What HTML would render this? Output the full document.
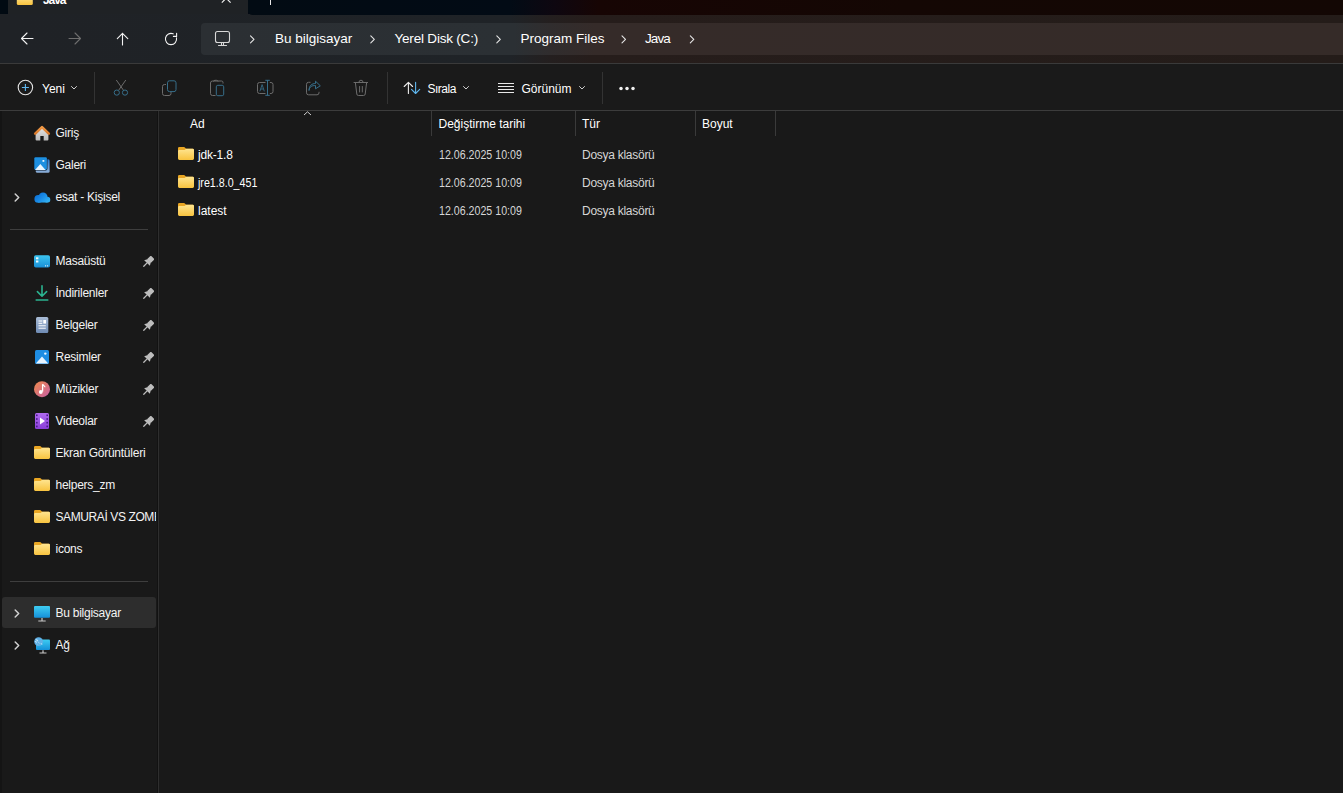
<!DOCTYPE html>
<html><head><meta charset="utf-8">
<style>
*{margin:0;padding:0;box-sizing:border-box}
html,body{width:1343px;height:793px;overflow:hidden;background:#191919}
body{position:relative;font-family:"Liberation Sans",sans-serif;font-size:12px;color:#fff}
.a{position:absolute}
.t{position:absolute;line-height:1;white-space:nowrap}
svg{position:absolute;overflow:visible}
#title{left:0;top:0;width:1343px;height:14px;background:linear-gradient(90deg,#010914 0%,#050812 30%,#0c0505 60%,#120604 100%)}
#nav{left:0;top:14px;width:1343px;height:49px;background:linear-gradient(90deg,#1f2226 0%,#1f2327 38%,#241f1f 41%,#261d1b 44%,#241c19 100%)}
#tab{left:8px;top:0;width:240px;height:14px;background:#1f2225}
#addr{left:201px;top:23px;width:1160px;height:32px;border-radius:4px;background:linear-gradient(90deg,#2b2f33 0%,#2b3034 27%,#302d2e 30%,#352b29 34%,#352b28 100%)}
#line1{left:0;top:63px;width:1343px;height:1px;background:#3a3a3a}
#tool{left:0;top:64px;width:1343px;height:46px;background:#1a1a1a}
#line2{left:0;top:110px;width:1343px;height:1px;background:#3c3c3c}
#side{left:0;top:111px;width:158px;height:682px;background:#191919}
#sdiv{left:158px;top:111px;width:1px;height:682px;background:#2e2e2e;box-shadow:-1px 0 0 #121212,1px 0 0 #161616}
#main{left:159px;top:111px;width:1184px;height:682px;background:#191919}
.sep{background:#3e3e3e;height:1px}
.vsep{background:#3a3a3a;width:1px}
.coldiv{background:#3a3a3a;width:1px;top:111px;height:25px}
.sb{font-size:12px;color:#f3f3f3;letter-spacing:-0.25px}
.row{font-size:12px}
.gray{color:#d6d6d6}
</style></head><body>
<div id="title" class="a"></div>
<div id="nav" class="a"></div>
<div id="tab" class="a"></div>
<div id="addr" class="a"></div>
<div id="line1" class="a"></div>
<div id="tool" class="a"></div>
<div id="line2" class="a"></div>
<div id="side" class="a"></div>
<div id="sdiv" class="a"></div>
<div class="a" style="left:0;top:111px;width:2px;height:682px;background:#141414"></div>
<div id="main" class="a"></div>
<div class="a" style="left:2px;top:597px;width:154px;height:31px;border-radius:3px;background:#2d2d2d"></div>


<!-- title bar bits -->
<div class="a" style="left:248px;top:0;width:1095px;height:14.6px;border-bottom-left-radius:4.5px;background:linear-gradient(90deg,#020b13 0%,#020b15 24%,#0e0710 28%,#170504 32%,#140704 60%,#130704 100%)"></div>
<div class="a" style="left:0;top:0;width:8px;height:14px;border-bottom-right-radius:3px;background:#010a12"></div>
<svg style="left:0;top:0" width="300" height="14">
 <path d="M16.8 -4 h14.5 a1.5 1.5 0 0 1 1.5 1.5 v6 a1.5 1.5 0 0 1 -1.5 1.5 h-13 a1.5 1.5 0 0 1 -1.5 -1.5z" fill="url(#fg)"/>
 <path d="M22.5 -3 L231 3" stroke="none"/>
 <path d="M221.8 -6.2 L230.6 2.6 M230.6 -6.2 L221.8 2.6" stroke="#f0f0f0" stroke-width="1.15"/>
 <path d="M270.5 -5 V5" stroke="#e8e8e8" stroke-width="1"/>
</svg>
<div class="t" style="left:43px;top:-6.5px;font-size:12px;color:#fff;letter-spacing:-1.1px;font-weight:bold">Java</div>

<!-- nav arrows -->
<svg style="left:0;top:14px" width="200" height="49">
 <g fill="none" stroke-width="1.1" stroke-linecap="round" stroke-linejoin="round">
  <path d="M33 24.5 H21.5 M27 19 L21.5 24.5 L27 30" stroke="#f2f2f2"/>
  <path d="M69 24.5 H80.5 M75 19 L80.5 24.5 L75 30" stroke="#6e6e6e"/>
  <path d="M122.5 31 V19.3 M117.3 24.6 L122.5 19.3 L127.8 24.6" stroke="#f2f2f2"/>
  <path d="M173.2 19.85 A5.6 5.6 0 1 0 176.5 23.9" stroke="#f2f2f2"/>
  <path d="M176.6 19.2 V22.4 H173.4" stroke="#f2f2f2"/>
 </g>
</svg>

<!-- address bar icons -->
<svg style="left:200px;top:23px" width="520" height="32">
 <g fill="none" stroke="#d8d8d8" stroke-width="1.1" stroke-linecap="round" stroke-linejoin="round">
  <rect x="15.5" y="8.5" width="14" height="11" rx="2"/>
  <path d="M21.5 20 V22 M23.5 20 V22 M18.5 22.5 H26.5"/>
 </g>
 <g fill="none" stroke="#e6e6e6" stroke-width="1.1" stroke-linecap="round" stroke-linejoin="round">
  <path d="M50.5 12.8 L54 16.3 L50.5 19.8"/>
  <path d="M170.8 12.8 L174.3 16.3 L170.8 19.8"/>
  <path d="M296.8 12.8 L300.3 16.3 L296.8 19.8"/>
  <path d="M422 12.8 L425.5 16.3 L422 19.8"/>
  <path d="M490.3 12.8 L493.8 16.3 L490.3 19.8"/>
 </g>
</svg>

<!-- toolbar icons -->
<svg style="left:0;top:64px" width="700" height="46">
 <circle cx="25.4" cy="23.5" r="7.2" fill="none" stroke="#e4e4e4" stroke-width="1.1"/>
 <path d="M25.4 20 V27 M21.9 23.5 H28.9" stroke="#5fb6ee" stroke-width="1.1" fill="none"/>
 <path d="M71.5 22.5 L74 25 L76.5 22.5" stroke="#cfcfcf" stroke-width="1" fill="none" stroke-linecap="round"/>
 <rect x="94" y="8" width="1" height="32" fill="#333"/>
 <!-- scissors -->
 <g fill="none" stroke-width="1">
  <path d="M116.3 16 L123.3 26 M125.8 16 L118.8 26" stroke="#6c6c6c"/>
  <circle cx="116.8" cy="28.6" r="2.6" stroke="#376f8b"/>
  <circle cx="125" cy="28.6" r="2.6" stroke="#376f8b"/>
 </g>
 <!-- copy -->
 <g fill="none" stroke-width="1">
  <path d="M166 20.5 h-1.5 a2 2 0 0 0 -2 2 v7 a2 2 0 0 0 2 2 h4.5 a2 2 0 0 0 2 -2 v-1.5" stroke="#6c6c6c"/>
  <rect x="167.5" y="16.8" width="8.5" height="10.8" rx="2" stroke="#376f8b"/>
 </g>
 <!-- paste -->
 <g fill="none" stroke-width="1">
  <path d="M215.5 31.5 h-3 a2 2 0 0 1 -2 -2 v-10.5 a2 2 0 0 1 2 -2 h9 a1.5 1.5 0 0 1 1.5 1.5 v1" stroke="#6c6c6c"/>
  <path d="M213.5 17.5 a1.5 1.5 0 0 1 1.5 -1.2 h1.5 a1.5 1.5 0 0 1 1.5 1.2" stroke="#6c6c6c"/>
  <rect x="216.3" y="21.3" width="7.4" height="10.4" rx="1.5" stroke="#376f8b"/>
 </g>
 <!-- rename -->
 <g fill="none" stroke-width="1">
  <path d="M265.5 18.5 h-6 a2 2 0 0 0 -2 2 v7 a2 2 0 0 0 2 2 h6" stroke="#6c6c6c"/>
  <path d="M269.8 18.5 h1.2 a2 2 0 0 1 2 2 v7 a2 2 0 0 1 -2 2 h-1.2" stroke="#6c6c6c"/>
  <path d="M267.5 16 V31.5 M265.3 16.3 H269.8 M265.3 31.3 H269.8" stroke="#376f8b"/>
  <path d="M259.9 27.3 L262.1 20.6 L264.3 27.3 M260.7 25 H263.5" stroke="#376f8b" stroke-width="0.85"/>
 </g>
 <!-- share -->
 <g fill="none" stroke-width="1" stroke-linejoin="round">
  <path d="M310.5 18.3 h-2 a2 2 0 0 0 -2 2 v8.5 a2 2 0 0 0 2 2 h8.5 a2 2 0 0 0 2 -2 v-1" stroke="#6c6c6c"/>
  <path d="M309 26.5 C309.5 22.5 312 21.5 315.5 21.5 V24.8 L320.3 21.8 L315.5 17.2 V19.5 C312 19.5 309 21.5 309 26.5z" stroke="#376f8b"/>
 </g>
 <!-- delete -->
 <g fill="none" stroke="#6c6c6c" stroke-width="1" stroke-linecap="round">
  <path d="M354 18.5 H367.6"/>
  <path d="M358.9 18.3 a2.1 2.1 0 0 1 4.2 0"/>
  <path d="M355.4 18.8 L356.8 30 a1.6 1.6 0 0 0 1.6 1.5 h5.2 a1.6 1.6 0 0 0 1.6 -1.5 L366.6 18.8"/>
  <path d="M359.6 22.5 V28 M362.3 22.5 V28"/>
 </g>
 <rect x="387" y="8" width="1" height="32" fill="#333"/>
 <!-- sort -->
 <g fill="none" stroke-width="1.1" stroke-linecap="round" stroke-linejoin="round">
  <path d="M408.4 29.5 V18.3 M404.2 22.5 L408.4 18.3 L412.6 22.5" stroke="#ededed"/>
  <path d="M415.6 18.3 V29.5 M411.5 25.3 L415.6 29.5 L419.7 25.3" stroke="#5fb6ee"/>
 </g>
 <path d="M463.5 22.5 L466 25 L468.5 22.5" stroke="#cfcfcf" stroke-width="1" fill="none" stroke-linecap="round"/>
 <!-- view -->
 <g stroke="#e8e8e8" stroke-width="1.1">
  <path d="M498 19.5 H514 M498 22.5 H514 M498 25.5 H514 M498 28.5 H514"/>
 </g>
 <path d="M579.5 22.5 L582 25 L584.5 22.5" stroke="#cfcfcf" stroke-width="1" fill="none" stroke-linecap="round"/>
 <rect x="602" y="8" width="1" height="32" fill="#333"/>
 <circle cx="621" cy="24.6" r="1.75" fill="#f0f0f0"/>
 <circle cx="627" cy="24.6" r="1.75" fill="#f0f0f0"/>
 <circle cx="633" cy="24.6" r="1.75" fill="#f0f0f0"/>
</svg>

<!-- sort caret -->
<svg style="left:300px;top:110px" width="16" height="8">
 <path d="M4 5 L7.5 1.8 L11 5" stroke="#cfcfcf" stroke-width="1" fill="none"/>
</svg>


<svg width="0" height="0" style="position:absolute">
 <defs>
  <linearGradient id="fg" x1="0" y1="0" x2="0" y2="1"><stop offset="0" stop-color="#ffe590"/><stop offset="1" stop-color="#f8c33f"/></linearGradient>
  <linearGradient id="roof" x1="0" y1="0" x2="0" y2="1"><stop offset="0" stop-color="#f29a46"/><stop offset="1" stop-color="#d8782a"/></linearGradient>
  <linearGradient id="wall" x1="0" y1="0" x2="0" y2="1"><stop offset="0" stop-color="#e6e6e6"/><stop offset="1" stop-color="#b9b9b9"/></linearGradient>
  <linearGradient id="desk" x1="0" y1="0" x2="0" y2="1"><stop offset="0" stop-color="#3cc4f0"/><stop offset="1" stop-color="#1a8fd6"/></linearGradient>
  <linearGradient id="doc" x1="0" y1="0" x2="0" y2="1"><stop offset="0" stop-color="#a9bcd6"/><stop offset="1" stop-color="#6f8bb4"/></linearGradient>
  <linearGradient id="mus" x1="0" y1="0" x2="1" y2="1"><stop offset="0" stop-color="#f08a4a"/><stop offset="1" stop-color="#c65fa6"/></linearGradient>
  <linearGradient id="vid" x1="0" y1="0" x2="0" y2="1"><stop offset="0" stop-color="#b06af0"/><stop offset="1" stop-color="#8a3fd8"/></linearGradient>
  <linearGradient id="pc" x1="0" y1="0" x2="0" y2="1"><stop offset="0" stop-color="#3ecdf2"/><stop offset="1" stop-color="#1590d8"/></linearGradient>
  <linearGradient id="cloud" x1="0" y1="0" x2="0" y2="1"><stop offset="0" stop-color="#1b8ae0"/><stop offset="1" stop-color="#1f9cf0"/></linearGradient>
  <symbol id="folder" viewBox="0 0 16 13">
   <path d="M1.3 0 H5.8 a1.2 1.2 0 0 1 0.8 0.3 L8.2 1.8 H14.6 a1.4 1.4 0 0 1 1.4 1.4 V5 H0 V1.3 A1.3 1.3 0 0 1 1.3 0z" fill="#e9a623"/>
   <path d="M0 4.2 a1.3 1.3 0 0 1 1.3 -1.3 H6.6 L8.2 1.8 H14.6 a1.4 1.4 0 0 1 1.4 1.4 V11.6 a1.4 1.4 0 0 1 -1.4 1.4 H1.4 A1.4 1.4 0 0 1 0 11.6z" fill="url(#fg)"/>
  </symbol>
  <symbol id="pin" viewBox="0 0 12 12">
   <g transform="rotate(45 6 6)" fill="#bdbdbd">
    <rect x="3.4" y="-0.6" width="5.2" height="5.6" rx="1"/>
    <path d="M3.6 4.6 H8.4 L10 7.4 H2z"/>
    <rect x="5.35" y="7" width="1.3" height="5.6" rx="0.6"/>
   </g>
  </symbol>
  <symbol id="chev" viewBox="0 0 6 9">
   <path d="M1.2 0.9 L4.7 4.5 L1.2 8.1" stroke="#d2d2d2" stroke-width="1.45" fill="none" stroke-linecap="round" stroke-linejoin="round"/>
  </symbol>
 </defs>
</svg>

<!-- row folder icons -->
<svg style="left:178px;top:147px" width="16" height="13"><use href="#folder"/></svg>
<svg style="left:178px;top:175px" width="16" height="13"><use href="#folder"/></svg>
<svg style="left:178px;top:203px" width="16" height="13"><use href="#folder"/></svg>

<!-- sidebar icons -->
<svg style="left:34px;top:125px" width="16" height="16">
 <path d="M1.6 8 V14.6 a1 1 0 0 0 1 1 H6.3 V11 H9.7 V15.6 H13.4 a1 1 0 0 0 1 -1 V8 L8 2.4z" fill="url(#wall)"/>
 <path d="M1.2 8.6 L8 2.1 L14.8 8.6" stroke="url(#roof)" stroke-width="2.6" fill="none" stroke-linecap="round" stroke-linejoin="round"/>
</svg>
<svg style="left:34px;top:157px" width="16" height="16">
 <defs><linearGradient id="gb" x1="0" y1="0" x2="0" y2="1"><stop offset="0" stop-color="#2a78d0"/><stop offset="1" stop-color="#8fb0d8"/></linearGradient></defs>
 <rect x="1.8" y="2.2" width="13.8" height="13.6" rx="1.5" fill="url(#gb)"/>
 <rect x="-0.2" y="-0.2" width="13.6" height="13.6" rx="1.6" fill="#101820"/>
 <rect x="0.3" y="0.3" width="12.6" height="12.6" rx="1.3" fill="#1d8fe0"/>
 <path d="M1 12.9 L6.3 7 L11.6 12.9z" fill="#eaf6ff"/>
 <rect x="8.5" y="3" width="1.8" height="1.8" fill="#eaf6ff"/>
</svg>
<svg style="left:33.5px;top:190.5px" width="17" height="13">
 <defs><linearGradient id="cl2" gradientUnits="userSpaceOnUse" x1="3" y1="2" x2="12" y2="12"><stop offset="0" stop-color="#0b6fd6"/><stop offset="0.5" stop-color="#1a8be6"/><stop offset="1" stop-color="#31b0f2"/></linearGradient></defs>
 <defs><clipPath id="clc"><rect x="0" y="0" width="17" height="11.7" rx="0"/></clipPath></defs>
 <g fill="url(#cl2)" clip-path="url(#clc)">
  <circle cx="9" cy="6" r="4.5"/>
  <circle cx="4.4" cy="7.9" r="4"/>
  <circle cx="13.3" cy="8.7" r="3"/>
  <rect x="4" y="7" width="9.5" height="4.7"/>
 </g>
</svg>
<svg style="left:14px;top:193px" width="6" height="9"><use href="#chev"/></svg>

<svg style="left:34px;top:254.5px" width="16" height="13">
 <rect x="0" y="0.3" width="16" height="12.2" rx="1.8" fill="url(#desk)"/>
 <rect x="2" y="2.3" width="2.4" height="2" fill="#fff" opacity="0.9"/>
 <rect x="2" y="5.5" width="2.4" height="2" fill="#fff" opacity="0.9"/>
 <circle cx="11.6" cy="10.8" r="0.6" fill="#fff"/><circle cx="13.6" cy="10.8" r="0.6" fill="#fff"/>
</svg>
<svg style="left:35px;top:285px" width="14" height="17">
 <path d="M7 0.8 V11 M2.4 6.6 L7 11.2 L11.6 6.6" stroke="#2bb390" stroke-width="1.6" fill="none" stroke-linecap="round" stroke-linejoin="round"/>
 <path d="M1.2 15 H12.8" stroke="#2bb390" stroke-width="1.6" stroke-linecap="round"/>
</svg>
<svg style="left:36px;top:317px" width="13" height="16">
 <rect x="0" y="0" width="12.3" height="16" rx="1.5" fill="url(#doc)"/>
 <path d="M2.5 4 H6.3 M2.5 6.3 H6.3 M2.5 8.8 H9.8 M2.5 11.2 H9.8" stroke="#fff" stroke-width="1"/>
 <rect x="7.3" y="3" width="2.7" height="3.6" fill="#fff"/>
</svg>
<svg style="left:35px;top:350px" width="14" height="14">
 <rect x="0" y="0" width="14" height="14" rx="1.5" fill="#1e8de3"/>
 <path d="M0.8 13.4 L7 6.6 L13.2 13.4z" fill="#e8f4ff"/>
 <circle cx="10.3" cy="3.6" r="1.2" fill="#e8f4ff"/>
</svg>
<svg style="left:34px;top:381px" width="16" height="17">
 <circle cx="8" cy="8.2" r="8" fill="url(#mus)"/>
 <path d="M8.6 3.3 V10.6" stroke="#fff" stroke-width="1.3"/>
 <path d="M8.6 3.3 C9.6 4.8 11 5 11 6.2" stroke="#fff" stroke-width="1.1" fill="none"/>
 <circle cx="6.8" cy="11" r="1.9" fill="#fff"/>
</svg>
<svg style="left:35px;top:413px" width="14" height="16">
 <rect x="0" y="0" width="14" height="16" rx="1.5" fill="url(#vid)"/>
 <rect x="1" y="1.5" width="1.6" height="1.6" fill="#4a1a8a"/><rect x="1" y="5.2" width="1.6" height="1.6" fill="#4a1a8a"/><rect x="1" y="8.9" width="1.6" height="1.6" fill="#4a1a8a"/><rect x="1" y="12.6" width="1.6" height="1.6" fill="#4a1a8a"/>
 <rect x="11.4" y="1.5" width="1.6" height="1.6" fill="#4a1a8a"/><rect x="11.4" y="5.2" width="1.6" height="1.6" fill="#4a1a8a"/><rect x="11.4" y="8.9" width="1.6" height="1.6" fill="#4a1a8a"/><rect x="11.4" y="12.6" width="1.6" height="1.6" fill="#4a1a8a"/>
 <path d="M5 4.5 L10 8 L5 11.5z" fill="#fff"/>
</svg>

<svg style="left:141.5px;top:255.5px" width="12" height="12"><use href="#pin"/></svg>
<svg style="left:141.5px;top:287.5px" width="12" height="12"><use href="#pin"/></svg>
<svg style="left:141.5px;top:319.5px" width="12" height="12"><use href="#pin"/></svg>
<svg style="left:141.5px;top:351.5px" width="12" height="12"><use href="#pin"/></svg>
<svg style="left:141.5px;top:383.5px" width="12" height="12"><use href="#pin"/></svg>
<svg style="left:141.5px;top:415.5px" width="12" height="12"><use href="#pin"/></svg>

<svg style="left:34px;top:446px" width="16" height="13"><use href="#folder"/></svg>
<svg style="left:34px;top:478px" width="16" height="13"><use href="#folder"/></svg>
<svg style="left:34px;top:510px" width="16" height="13"><use href="#folder"/></svg>
<svg style="left:34px;top:542px" width="16" height="13"><use href="#folder"/></svg>

<svg style="left:14px;top:609px" width="6" height="9"><use href="#chev"/></svg>
<svg style="left:34px;top:605.5px" width="16" height="16">
 <rect x="0" y="0" width="16" height="11.8" rx="1" fill="url(#pc)"/>
 <path d="M8 12 V14.8 M4.3 15 H11.7" stroke="#c8c8c8" stroke-width="1.2"/>
</svg>
<svg style="left:14px;top:641px" width="6" height="9"><use href="#chev"/></svg>
<svg style="left:34px;top:637px" width="16" height="17">
 <rect x="2" y="2.5" width="14" height="10.5" rx="1" fill="url(#pc)"/>
 <path d="M9 13.2 V15.8 M5.5 16 H12.5" stroke="#c8c8c8" stroke-width="1.2"/>
 <circle cx="4.6" cy="4.6" r="4.4" fill="#5fb0e6"/>
 <path d="M1.2 2.6 C2.8 1.6 4.6 2.6 4.2 4.6 C3.8 6.2 5.6 6.8 7 6.4 C8 6 8.6 7 8.2 8" fill="#bfe2f8" />
 <path d="M0.8 4.2 C1.8 3.6 3 4.2 2.6 5.8 C2.4 7 3.6 8 4.6 8.9" fill="#d8efff" opacity="0.8"/>
</svg>

<!-- address text -->
<div class="t" style="left:275px;top:31.6px;font-size:13.5px;color:#fff">Bu bilgisayar</div>
<div class="t" style="left:394.5px;top:31.6px;font-size:13.5px;color:#fff;letter-spacing:-0.2px">Yerel Disk (C:)</div>
<div class="t" style="left:520.5px;top:31.6px;font-size:13.5px;color:#fff">Program Files</div>
<div class="t" style="left:645px;top:31.6px;font-size:13.5px;color:#fff;letter-spacing:-0.9px">Java</div>

<!-- toolbar text -->
<div class="t" style="left:42px;top:83px;">Yeni</div>
<div class="t" style="left:427.5px;top:83px;letter-spacing:-0.5px">Sırala</div>
<div class="t" style="left:521.5px;top:83px;">Görünüm</div>

<!-- headers -->
<div class="t" style="left:190px;top:118px;">Ad</div>
<div class="t" style="left:438.5px;top:118px;">Değiştirme tarihi</div>
<div class="t" style="left:582px;top:118px;">Tür</div>
<div class="t" style="left:702px;top:118px;">Boyut</div>
<div class="coldiv a" style="left:431px"></div>
<div class="coldiv a" style="left:575px"></div>
<div class="coldiv a" style="left:695px"></div>
<div class="coldiv a" style="left:775px"></div>

<!-- rows -->
<div class="t" style="left:198px;top:149px;letter-spacing:-0.2px">jdk-1.8</div>
<div class="t" style="left:198px;top:177px;transform:scaleX(0.89);transform-origin:0 0">jre1.8.0_451</div>
<div class="t" style="left:198px;top:205px;">latest</div>
<div class="t gray" style="left:438.5px;top:149px;transform:scaleX(0.887);transform-origin:0 0">12.06.2025 10:09</div>
<div class="t gray" style="left:438.5px;top:177px;transform:scaleX(0.887);transform-origin:0 0">12.06.2025 10:09</div>
<div class="t gray" style="left:438.5px;top:205px;transform:scaleX(0.887);transform-origin:0 0">12.06.2025 10:09</div>
<div class="t gray" style="letter-spacing:-0.27px;left:582px;top:149px;">Dosya klasörü</div>
<div class="t gray" style="letter-spacing:-0.27px;left:582px;top:177px;">Dosya klasörü</div>
<div class="t gray" style="letter-spacing:-0.27px;left:582px;top:205px;">Dosya klasörü</div>

<!-- sidebar -->
<div class="t sb" style="left:55.5px;top:127px">Giriş</div>
<div class="t sb" style="left:55.5px;top:159px">Galeri</div>
<div class="t sb" style="left:55.5px;top:191px">esat - Kişisel</div>
<div class="a sep" style="left:10px;top:229px;width:138px"></div>
<div class="t sb" style="left:55.5px;top:255px">Masaüstü</div>
<div class="t sb" style="left:55.5px;top:287px">İndirilenler</div>
<div class="t sb" style="left:55.5px;top:319px">Belgeler</div>
<div class="t sb" style="left:55.5px;top:351px">Resimler</div>
<div class="t sb" style="left:55.5px;top:383px">Müzikler</div>
<div class="t sb" style="left:55.5px;top:415px">Videolar</div>
<div class="t sb" style="left:55.5px;top:447px">Ekran Görüntüleri</div>
<div class="t sb" style="left:55.5px;top:479px">helpers_zm</div>
<div class="t sb" style="left:55.5px;top:508px;padding-top:3px;width:100.5px;overflow:hidden;letter-spacing:-0.4px">SAMURAİ VS ZOMBIE</div>
<div class="t sb" style="left:55.5px;top:543px">icons</div>
<div class="a sep" style="left:10px;top:581px;width:138px"></div>
<div class="t sb" style="left:55.5px;top:607px">Bu bilgisayar</div>
<div class="t sb" style="left:55.5px;top:639px">Ağ</div>

</body></html>
